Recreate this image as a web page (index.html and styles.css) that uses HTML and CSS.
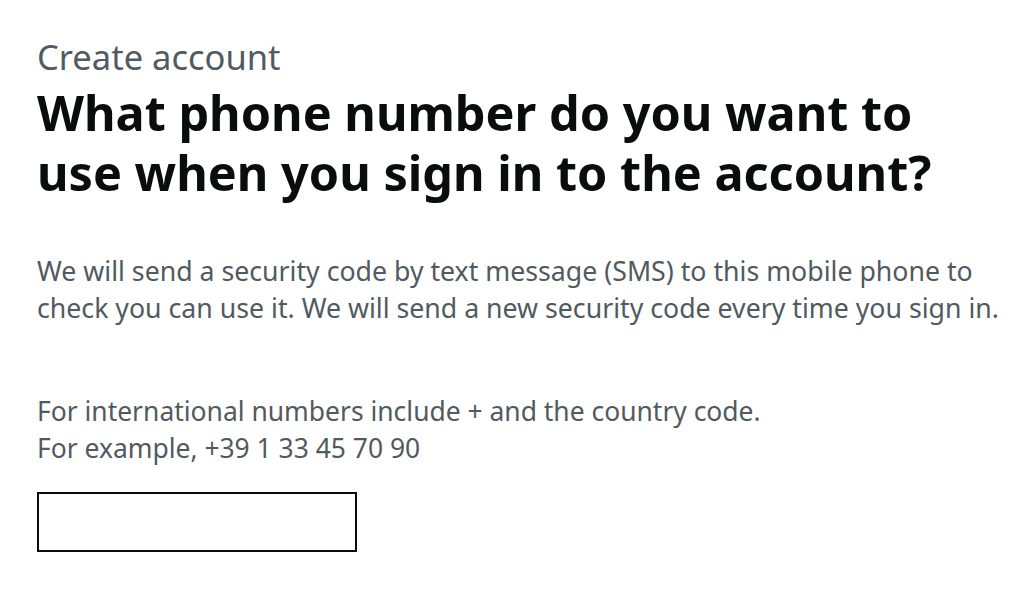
FILE: index.html
```html
<!DOCTYPE html>
<html lang="en">
<head>
    <meta charset="UTF-8">
    <meta name="viewport" content="width=device-width, initial-scale=1.0">
    <title>Create account</title>
    <link rel="stylesheet" href="styles.css">
</head>
<body>
    <main class="page">
        <span class="caption">Create account</span>
        <h1 class="heading">What phone number do you want to use when you sign in to the account?</h1>
        <p class="body">We will send a security code by text message (SMS) to this mobile phone to check you can use it. We will send a new security code every time you sign in.</p>
        <div class="hint">For international numbers include + and the country code.<br>For example, +39 1 33 45 70 90</div>
        <input class="phone" type="tel" id="phoneNumber" autocomplete="tel">
    </main>
</body>
</html>
```

FILE: styles.css
```css
body { margin: 0; background: #fff; font-family: "Noto Sans", Arial, sans-serif; }
.page { padding: 37px 8px 0 37px; display: flex; flex-direction: column; align-items: flex-start; }
.caption { display: block; color: #505a5f; font-size: 34.5px; line-height: 40px; }
.heading { margin: 5px 0 0; max-width: 950px; color: #0b0c0c; font-size: 48.6px; line-height: 60px; font-weight: 700; }
.body { margin: 50px 0 0; color: #505a5f; font-size: 26.7px; line-height: 37px; }
.hint { margin-top: 67px; color: #505a5f; font-size: 26.45px; line-height: 37px; }
.phone { margin-top: 25px; width: 320px; height: 60px; box-sizing: border-box; border: 2px solid #0b0c0c; border-radius: 0; padding: 5px; font: inherit; font-size: 26px; }
```
